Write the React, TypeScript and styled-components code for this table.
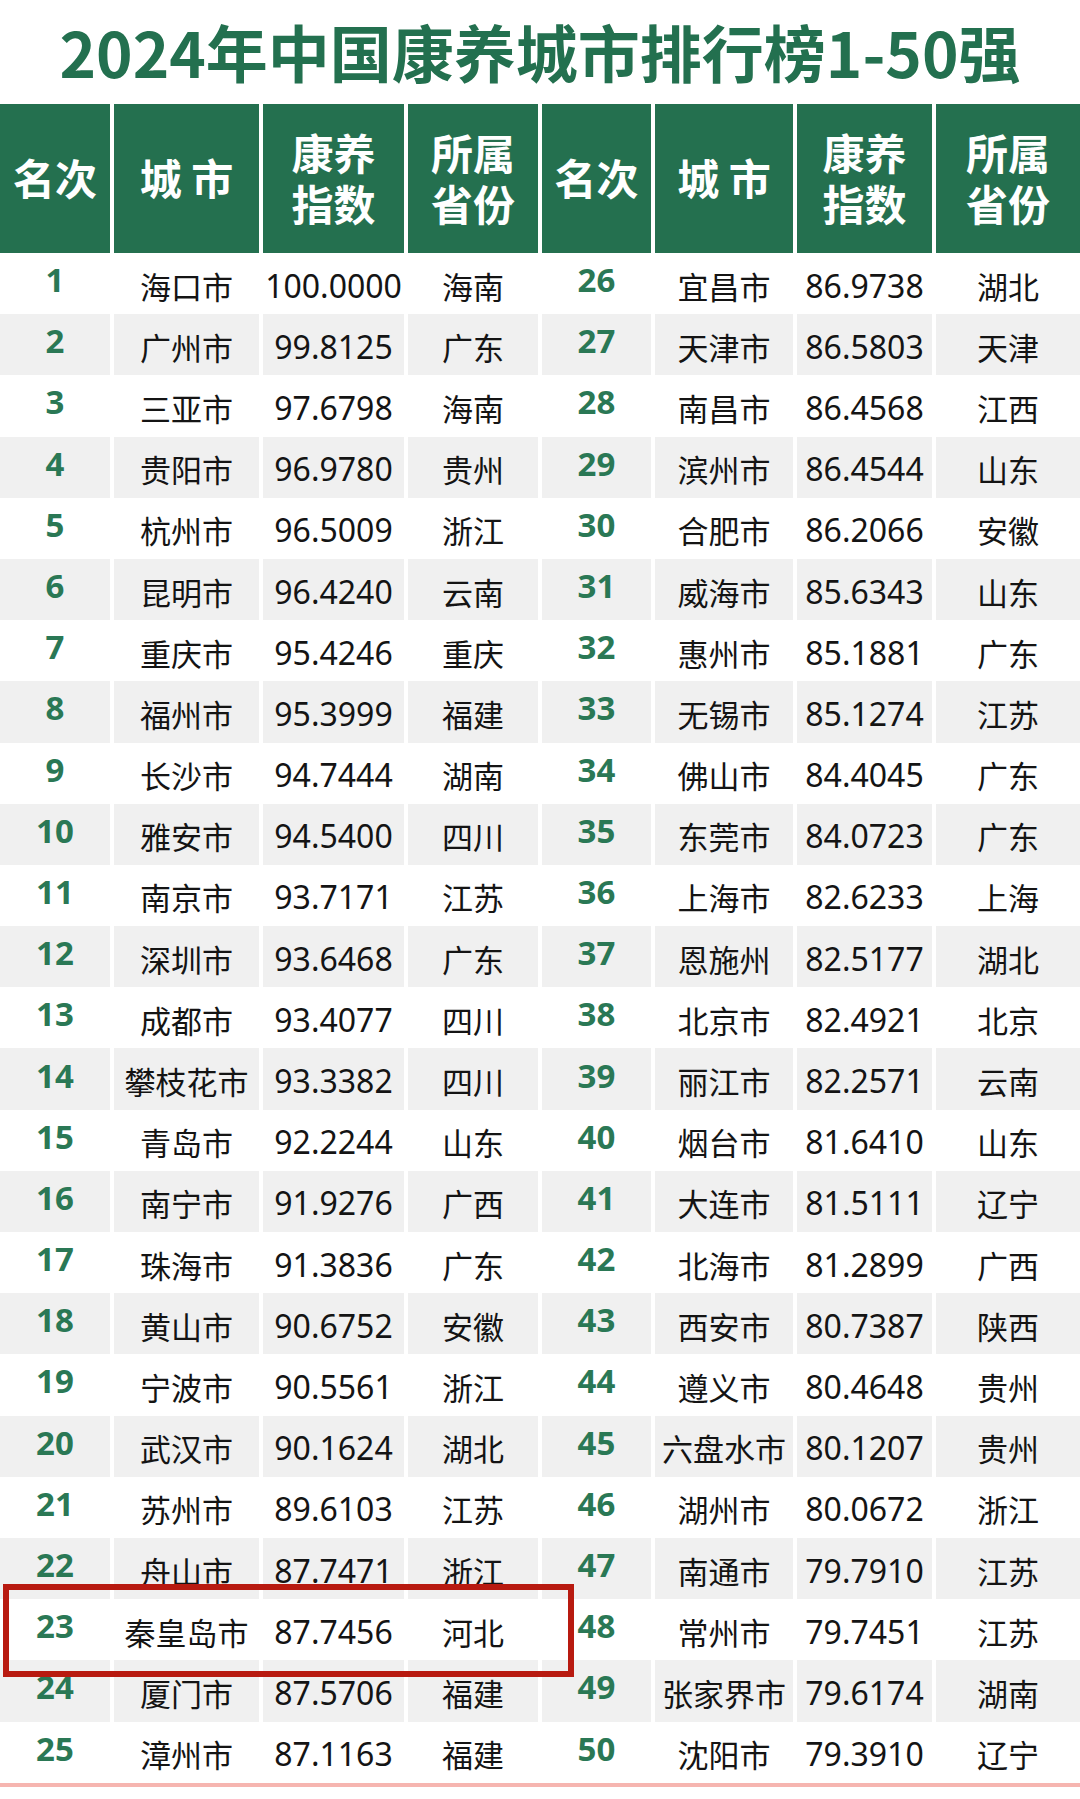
import styled, { createGlobalStyle } from "styled-components";

type Entry = [number, string, string, string];

const data: Entry[] = [
  [1, "海口市", "100.0000", "海南"],
  [2, "广州市", "99.8125", "广东"],
  [3, "三亚市", "97.6798", "海南"],
  [4, "贵阳市", "96.9780", "贵州"],
  [5, "杭州市", "96.5009", "浙江"],
  [6, "昆明市", "96.4240", "云南"],
  [7, "重庆市", "95.4246", "重庆"],
  [8, "福州市", "95.3999", "福建"],
  [9, "长沙市", "94.7444", "湖南"],
  [10, "雅安市", "94.5400", "四川"],
  [11, "南京市", "93.7171", "江苏"],
  [12, "深圳市", "93.6468", "广东"],
  [13, "成都市", "93.4077", "四川"],
  [14, "攀枝花市", "93.3382", "四川"],
  [15, "青岛市", "92.2244", "山东"],
  [16, "南宁市", "91.9276", "广西"],
  [17, "珠海市", "91.3836", "广东"],
  [18, "黄山市", "90.6752", "安徽"],
  [19, "宁波市", "90.5561", "浙江"],
  [20, "武汉市", "90.1624", "湖北"],
  [21, "苏州市", "89.6103", "江苏"],
  [22, "舟山市", "87.7471", "浙江"],
  [23, "秦皇岛市", "87.7456", "河北"],
  [24, "厦门市", "87.5706", "福建"],
  [25, "漳州市", "87.1163", "福建"],
  [26, "宜昌市", "86.9738", "湖北"],
  [27, "天津市", "86.5803", "天津"],
  [28, "南昌市", "86.4568", "江西"],
  [29, "滨州市", "86.4544", "山东"],
  [30, "合肥市", "86.2066", "安徽"],
  [31, "威海市", "85.6343", "山东"],
  [32, "惠州市", "85.1881", "广东"],
  [33, "无锡市", "85.1274", "江苏"],
  [34, "佛山市", "84.4045", "广东"],
  [35, "东莞市", "84.0723", "广东"],
  [36, "上海市", "82.6233", "上海"],
  [37, "恩施州", "82.5177", "湖北"],
  [38, "北京市", "82.4921", "北京"],
  [39, "丽江市", "82.2571", "云南"],
  [40, "烟台市", "81.6410", "山东"],
  [41, "大连市", "81.5111", "辽宁"],
  [42, "北海市", "81.2899", "广西"],
  [43, "西安市", "80.7387", "陕西"],
  [44, "遵义市", "80.4648", "贵州"],
  [45, "六盘水市", "80.1207", "贵州"],
  [46, "湖州市", "80.0672", "浙江"],
  [47, "南通市", "79.7910", "江苏"],
  [48, "常州市", "79.7451", "江苏"],
  [49, "张家界市", "79.6174", "湖南"],
  [50, "沈阳市", "79.3910", "辽宁"],
];

const headers = [
  ["名次"],
  ["城 市"],
  ["康养", "指数"],
  ["所属", "省份"],
];

const GlobalStyle = createGlobalStyle`
  html, body {
    margin: 0;
    padding: 0;
    background: #ffffff;
  }
  body {
    font-family: "Noto Sans", "Noto Sans CJK SC", sans-serif;
  }
`;

const Page = styled.div`
  width: 1080px;
  background: #ffffff;
`;

const Title = styled.h1`
  margin: 0;
  padding-top: 3px;
  height: 101px;
  line-height: 96px;
  text-align: center;
  font-family: "Noto Sans CJK SC", sans-serif;
  font-weight: 700;
  font-size: 62px;
  color: #23704f;
  white-space: nowrap;
  box-sizing: border-box;
  height: 104px;
`;

const TableWrap = styled.div`
  position: relative;
`;

const Grid = styled.div`
  display: grid;
  grid-template-columns: 110px 145px 141px 130px 109px 138px 135px 144px;
  grid-template-rows: 149px repeat(25, 61.2px);
  column-gap: 4px;
`;

const HeadCell = styled.div`
  background: #24704f;
  color: #ffffff;
  display: flex;
  flex-direction: column;
  align-items: center;
  justify-content: center;
  font-family: "Noto Sans CJK SC", sans-serif;
  font-weight: 700;
  font-size: 42px;
  line-height: 51px;
  white-space: pre;
  padding-bottom: 4px;
  box-sizing: border-box;
`;

const Cell = styled.div<{ $shade: boolean }>`
  background: ${(p) => (p.$shade ? "#f0f0f0" : "#ffffff")};
  display: flex;
  align-items: center;
  justify-content: center;
  white-space: nowrap;
  font-family: "Noto Sans", "Noto Sans CJK SC", sans-serif;
  font-size: 31px;
  color: #141414;
  padding-top: 3px;
  box-sizing: border-box;
`;

const NumCell = styled(Cell)`
  font-size: 32px;
`;

const RankCell = styled(Cell)`
  font-weight: 700;
  font-size: 33px;
  color: #2a7855;
  padding-top: 0;
  padding-bottom: 8px;
`;

const BottomLine = styled.div`
  height: 4px;
  background: #f6b5b0;
`;

const Highlight = styled.div`
  position: absolute;
  left: 3px;
  top: 1480px;
  width: 571px;
  height: 93px;
  border: 6px solid #b81a10;
  box-sizing: border-box;
  pointer-events: none;
`;

const DataCells = ({ entry, shade }: { entry: Entry; shade: boolean }) => (
  <>
    <RankCell $shade={shade}>{entry[0]}</RankCell>
    <Cell $shade={shade}>{entry[1]}</Cell>
    <NumCell $shade={shade}>{entry[2]}</NumCell>
    <Cell $shade={shade}>{entry[3]}</Cell>
  </>
);

const DataRow = ({
  left,
  right,
  shade,
}: {
  left: Entry;
  right: Entry;
  shade: boolean;
}) => (
  <>
    <DataCells entry={left} shade={shade} />
    <DataCells entry={right} shade={shade} />
  </>
);

export default function App() {
  const rows = data.slice(0, 25).map((left, i) => [left, data[i + 25]] as const);
  return (
    <Page>
      <GlobalStyle />
      <Title>2024年中国康养城市排行榜1-50强</Title>
      <TableWrap>
        <Grid>
          {[...headers, ...headers].map((lines, i) => (
            <HeadCell key={`h${i}`}>{lines.join("\n")}</HeadCell>
          ))}
          {rows.map(([left, right], i) => (
            <DataRow key={left[0]} left={left} right={right} shade={i % 2 === 1} />
          ))}
        </Grid>
        <Highlight />
      </TableWrap>
      <BottomLine />
    </Page>
  );
}
